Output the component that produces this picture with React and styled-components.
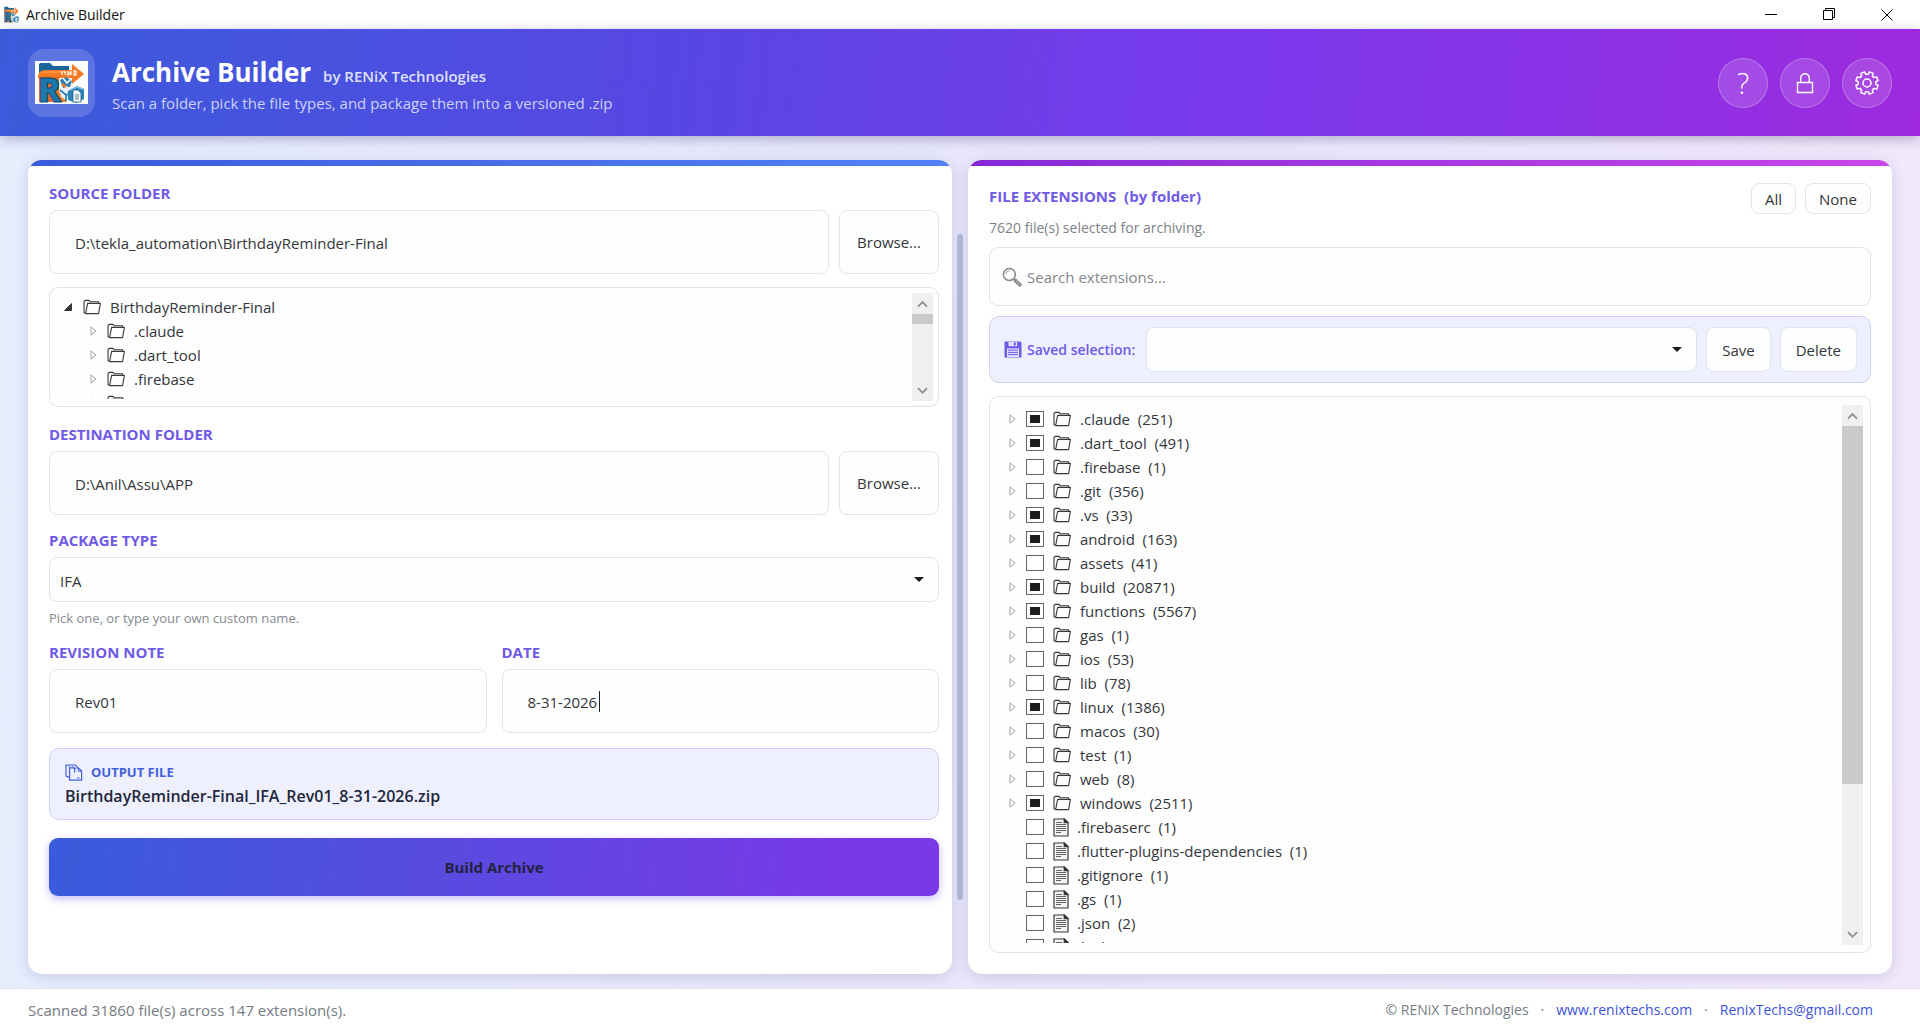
import React, { useState } from 'react'
import styled, { createGlobalStyle } from 'styled-components'

const GlobalStyle = createGlobalStyle`
  * {
    box-sizing: border-box;
  }

  body {
    margin: 0;
    font-family: "Open Sans", "Noto Sans", sans-serif;
    font-size: 15px;
    line-height: 20px;
    color: #33363b;
  }

  button, input, select {
    font: inherit;
    color: inherit;
  }
`

const folders = [
  { name: '.claude', count: 251, mixed: true },
  { name: '.dart_tool', count: 491, mixed: true },
  { name: '.firebase', count: 1 },
  { name: '.git', count: 356 },
  { name: '.vs', count: 33, mixed: true },
  { name: 'android', count: 163, mixed: true },
  { name: 'assets', count: 41 },
  { name: 'build', count: 20871, mixed: true },
  { name: 'functions', count: 5567, mixed: true },
  { name: 'gas', count: 1 },
  { name: 'ios', count: 53 },
  { name: 'lib', count: 78 },
  { name: 'linux', count: 1386, mixed: true },
  { name: 'macos', count: 30 },
  { name: 'test', count: 1 },
  { name: 'web', count: 8 },
  { name: 'windows', count: 2511, mixed: true },
]

const files = [
  { name: '.firebaserc', count: 1 },
  { name: '.flutter-plugins-dependencies', count: 1 },
  { name: '.gitignore', count: 1 },
  { name: '.gs', count: 1 },
  { name: '.json', count: 2 },
  { name: '.lock', count: 1 },
]

/* ---------- icons ---------- */

const LogoSvg = styled.svg`
  overflow: visible;
`

function LogoIcon({ width, height }) {
  return (
    <LogoSvg width={width} height={height} viewBox="0 0 53 43" preserveAspectRatio="none" aria-hidden="true">
      <rect width="53" height="43" fill="#fdfdfd" />
      <path d="M4 4q0-2 2-2h9l3 3h16v8H4z" fill="#17669c" />
      <path d="M3 17q0-8 7-8h27V3l12 10-12 10v-6H10q-3 0-4 4z" fill="#f47a23" />
      <path d="M6 11h31" stroke="#ffa45c" strokeWidth="1" />
      <path d="M27 10v4M29 10l2 4M33 10v4l2-2 1 2v-4M39 10v4h2v-4z" stroke="#fff2e3" strokeWidth="1.3" fill="none" />
      <path d="M4 16h20v25H4z" fill="#d96c26" />
      <path d="M15 41l8-12 9 12z" fill="#ef7a2b" />
      <path d="M25 19l6-3 6 4-2 6-7 1z" fill="#2d7fb0" />
      <path d="M28 17l4 5 4-4" stroke="#e9f4fb" strokeWidth="1.6" fill="none" />
      <path d="M25 29l7-4 6 6-7 8-5-3z" fill="#e8f1f7" />
      <path d="M25 29l6 5 7-3M31 34v6" stroke="#2b83b8" strokeWidth="1.8" fill="none" />
      <path d="M27 23l4 3" stroke="#f47a23" strokeWidth="2.4" />
      <path d="M33 30l9-5 7 3v10l-8 4-8-3z" fill="#2b83b8" />
      <path d="M35 29l7-3 6 2" stroke="#7cc0e6" strokeWidth="1.4" fill="none" />
      <path d="M38 29h5l3 3v9h-8z" fill="#f6fafc" stroke="#1c5d8c" strokeWidth="0.8" />
      <path d="M40 34h4M40 36h4M40 38h4" stroke="#51748c" strokeWidth="0.9" />
      <text x="3" y="41" fontFamily="Open Sans" fontWeight="800" fontSize="34" fill="#1d78ae" stroke="#0d4a78" strokeWidth="1">R</text>
    </LogoSvg>
  )
}

function FolderIcon() {
  return (
    <svg width="18" height="16" viewBox="0 0 18 16" fill="none" stroke="#3a3a3a" strokeWidth="1.1" strokeLinejoin="round" aria-hidden="true">
      <path d="M2.6 14.4L1 13.6V2.6L2 1.4h4l1.2 1.4h8.4v1.6" />
      <path d="M4.6 4.4h12.8l-1.8 10.2H2.6z" />
    </svg>
  )
}

function FileIcon() {
  return (
    <svg width="16" height="19" viewBox="0 0 16 19" fill="none" stroke="#3a3a3a" strokeWidth="1.2" aria-hidden="true">
      <path d="M1 1h10.5L15 4.4V18H1z" fill="#f4f4f4" />
      <path d="M11.2 1v3.6H15z" fill="#222" />
      <path d="M3 4.5h6M3 6.5h10M3 8.5h10M3 10.5h10M3 12.5h10M3 14.5h5" strokeWidth="0.8" />
    </svg>
  )
}

function Arrow({ open }) {
  if (open) {
    return (
      <svg width="8" height="8" viewBox="0 0 8 8" aria-hidden="true">
        <path d="M7.5 0.5v7h-7z" fill="#333" stroke="#222" strokeWidth="0.8" />
      </svg>
    )
  }
  return (
    <svg width="8" height="10" viewBox="0 0 8 10" aria-hidden="true">
      <path d="M1 0.8l5 4.2-5 4.2z" fill="#fff" stroke="#a3a3a3" strokeWidth="1" />
    </svg>
  )
}

function SearchIcon() {
  return (
    <svg width="20" height="20" viewBox="0 0 20 20" fill="none" stroke="#85888c" aria-hidden="true">
      <circle cx="7.4" cy="7.4" r="6" strokeWidth="1.5" />
      <path d="M3.8 7.4a3.6 3.6 0 0 1 3.6-3.6" strokeWidth="0.8" />
      <path d="M11.8 11.8l1.6 1.6" strokeWidth="1.4" />
      <path d="M13.6 13.6l4.2 4" strokeWidth="3.8" strokeLinecap="round" />
      <path d="M13.8 13.4l4 3.8" stroke="#c9cbce" strokeWidth="1" />
    </svg>
  )
}

function FloppyIcon() {
  return (
    <svg width="18" height="17" viewBox="0 0 18 17" aria-hidden="true">
      <path d="M0.5 0.5h15.8l1.2 1.2v14.8H0.5z" fill="#6f5ce6" />
      <path d="M4.5 0.8h8.6v4.4H4.5z" fill="#e4e1fc" />
      <path d="M9.8 1.4h2v3h-2z" fill="#6f5ce6" />
      <path d="M3 7.4h12V16H3z" fill="#e4e1fc" />
      <path d="M4 9.2h10M4 11.4h10M4 13.6h10" stroke="#6f5ce6" strokeWidth="1" />
    </svg>
  )
}

function CopyIcon() {
  return (
    <svg width="18" height="17" viewBox="0 0 18 17" fill="none" stroke="#4361dc" strokeWidth="1.2" aria-hidden="true">
      <path d="M4 13.4L1 12V1h9.4l2.4 2.4" />
      <path d="M3.4 1.4L6 4.2M6.8 1.4l2.4 2.4" strokeWidth="0.9" />
      <path d="M4.6 3.8h4l1 1.2v-1h4l3 3v9.2H4.6z" fill="#eef0ff" />
      <path d="M9.6 4.4v4.4M13.4 4v3.2h3.2M12 14h2.6" strokeWidth="1" />
    </svg>
  )
}

function LockIcon() {
  return (
    <svg width="18" height="22" viewBox="0 0 18 22" fill="none" stroke="#fff" strokeWidth="1.4" aria-hidden="true">
      <path d="M1.5 10.5h15v10h-15z" />
      <path d="M4.7 10.5V6a4.3 4.3 0 0 1 8.6 0v4.5" />
    </svg>
  )
}

// eight teeth, with a valley straight up
function gearPath(cx, cy, outer, inner) {
  const points = []
  const steps = [[-15, inner], [-10, outer], [10, outer], [15, inner]]
  for (let i = 0; i < 8; i++) {
    const middle = 22.5 + i * 45
    steps.forEach(([offset, r]) => {
      const a = ((middle + offset - 90) * Math.PI) / 180
      points.push(`${(cx + r * Math.cos(a)).toFixed(2)} ${(cy + r * Math.sin(a)).toFixed(2)}`)
    })
  }
  return `M${points.join('L')}Z`
}

function GearIcon() {
  return (
    <svg width="26" height="26" viewBox="0 0 26 26" fill="none" stroke="#fff" strokeWidth="1.5" strokeLinejoin="round" aria-hidden="true">
      <path d={gearPath(13, 13, 11.4, 8.8)} />
      <circle cx="13" cy="13" r="4" />
    </svg>
  )
}

function Chevron({ down }) {
  return (
    <svg width="11" height="8" viewBox="0 0 11 8" fill="none" stroke="#8d8d8d" strokeWidth="1.8" aria-hidden="true">
      <path d={down ? 'M1 1.2l4.5 4.6L10 1.2' : 'M1 6.6l4.5-4.6L10 6.6'} />
    </svg>
  )
}

/* ---------- window ---------- */

const Window = styled.div`
  display: flex;
  flex-direction: column;
  height: 100vh;
  min-height: 960px;
  background: linear-gradient(100deg, #e7eefe 0%, #e9e8fb 50%, #f3e9fc 100%);
`

const TitleBar = styled.div`
  display: flex;
  align-items: center;
  gap: 6px;
  height: 29px;
  padding: 0 4px 0 3px;
  background: #fff;
  color: #111;
  font-size: 14px;
`

const WindowControls = styled.div`
  display: flex;
  margin-left: auto;
`

const WindowButton = styled.button`
  display: flex;
  align-items: center;
  justify-content: center;
  width: 58px;
  height: 29px;
  padding: 0;
  border: 0;
  background: none;
`

const Header = styled.header`
  display: flex;
  align-items: center;
  gap: 17px;
  height: 107px;
  padding: 0 28px;
  background: linear-gradient(97deg, #3a5cdb 0%, #5a45e3 38%, #7c3aed 64%, #8f31e4 86%, #9e29de 100%);
  box-shadow: 0 3px 12px rgba(60, 50, 110, 0.35);
`

const LogoTile = styled.div`
  display: flex;
  align-items: center;
  justify-content: center;
  width: 67px;
  height: 68px;
  border-radius: 16px;
  background: rgba(255, 255, 255, 0.16);
`

const HeaderText = styled.div`
  display: flex;
  flex-direction: column;
  gap: 4px;
  padding-top: 2px;
`

const TitleLine = styled.div`
  display: flex;
  align-items: baseline;
  gap: 12px;
  color: #dfe1fb;
  font-weight: 600;
`

const Title = styled.h1`
  margin: 0;
  color: #fff;
  font-size: 26px;
  line-height: 34px;
  font-weight: 700;
`

const Tagline = styled.div`
  color: #cdd2f8;
`

const HeaderActions = styled.div`
  display: flex;
  gap: 12px;
  margin-left: auto;
`

const RoundButton = styled.button`
  display: flex;
  align-items: center;
  justify-content: center;
  width: 50px;
  height: 50px;
  padding: 0;
  border: 1px solid rgba(255, 255, 255, 0.26);
  border-radius: 50%;
  background: rgba(255, 255, 255, 0.14);
  color: #fff;
  font-size: 29px;
  font-weight: 300;
`

/* ---------- panels ---------- */

const Panels = styled.main`
  flex: 1;
  min-height: 0;
  display: grid;
  grid-template-columns: minmax(0, 1fr) 16px minmax(0, 1fr);
  padding: 24px 28px 14px;
`

const Card = styled.section`
  display: flex;
  flex-direction: column;
  min-height: 0;
  border-radius: 14px;
  overflow: hidden;
  background: #fff;
  box-shadow: 0 3px 16px rgba(60, 60, 120, 0.18);
`

const CardStripe = styled.div`
  flex: none;
  height: 6px;
  background: ${p => p.$purple
    ? 'linear-gradient(90deg, #8428d8, #9a33dc 30%, #c845ea)'
    : 'linear-gradient(90deg, #3a5bdc, #5480f5)'};
`

const CardBody = styled.div`
  flex: 1;
  min-height: 0;
  display: flex;
  flex-direction: column;
  padding: ${p => p.$wide ? '17px 21px 21px 21px' : '17px 13px 21px 21px'};
`

const Splitter = styled.div`
  display: flex;
  justify-content: center;
  padding: 74px 0;
`

const SplitterThumb = styled.div`
  width: 6px;
  border-radius: 3px;
  background: #b1bad8;
`

/* ---------- form parts ---------- */

const Field = styled.div`
  display: flex;
  flex-direction: column;
  gap: 7px;
  margin-bottom: ${p => p.$tall ? '17px' : '15px'};
`

const Label = styled.label`
  color: #6f5ae6;
  font-size: 15px;
  font-weight: 700;
`

const Heading = styled.h2`
  margin: 0;
  color: #6f5ae6;
  font-size: 15px;
  line-height: 26px;
  font-weight: 700;
  white-space: pre;
`

const Row = styled.div`
  display: flex;
  gap: 10px;
`

const TwoColumns = styled.div`
  display: grid;
  grid-template-columns: 1fr 1fr;
  gap: 15px;
`

const TextBox = styled.input`
  flex: 1;
  min-width: 0;
  width: 100%;
  height: 64px;
  padding: 1px 25px 0;
  border: 1px solid #e1e3ee;
  border-radius: 8px;
  background: #fefefe;
  outline: none;
`

const CaretWrap = styled.div`
  position: relative;
  display: flex;
`

const Caret = styled.span`
  position: absolute;
  top: 22px;
  left: 97px;
  width: 1px;
  height: 21px;
  background: #222;
`

const Button = styled.button`
  height: ${p => p.$height};
  padding: 0 ${p => p.$pad || '13px'};
  border: 1px solid #e3e4ec;
  border-radius: 8px;
  background: #fefefe;
  white-space: nowrap;
`

const BrowseButton = styled(Button)`
  width: 100px;
`

const SelectWrap = styled.div`
  position: relative;
  flex: 1;
  display: flex;

  svg {
    position: absolute;
    right: 15px;
    top: 50%;
    margin-top: -3px;
    pointer-events: none;
  }
`

const Select = styled.select`
  appearance: none;
  width: 100%;
  height: 45px;
  padding: 2px 30px 0 10px;
  border: 1px solid #dfe1ee;
  border-radius: 8px;
  background: #fefefe;
`

const Hint = styled.div`
  color: #868a91;
  font-size: 13px;
  line-height: 18px;
`

const SelectedCount = styled.div`
  margin-top: 4px;
  color: #7d8187;
  font-size: 14px;
`

const OutputBox = styled.div`
  height: 72px;
  padding: 13px 15px;
  border: 1px solid #cfd0f5;
  border-radius: 10px;
  background: #eef0ff;
`

const OutputLabel = styled.div`
  display: flex;
  align-items: center;
  gap: 8px;
  color: #4361dc;
  font-size: 13px;
  font-weight: 700;
`

const OutputName = styled.div`
  margin-top: 4px;
  color: #22263a;
  font-size: 16px;
  font-weight: 600;
`

const BuildButton = styled.button`
  height: 58px;
  margin-top: 18px;
  border: 0;
  border-radius: 9px;
  background: linear-gradient(93deg, #395cdb 0%, #5a4ae0 45%, #7a39e6 90%);
  box-shadow: 0 3px 9px rgba(100, 60, 230, 0.35);
  color: #23233f;
  font-weight: 700;
`

/* ---------- trees ---------- */

const TreeBox = styled.div`
  display: flex;
  border: 1px solid #e1e2ec;
  border-radius: 9px;
  background: #fefefe;
  ${p => p.$fill
    ? 'flex: 1; min-height: 0; margin-top: 13px; padding: 8px 7px 7px 19px;'
    : 'height: 120px; margin-top: 6px; padding: 5px 5px 5px 14px;'}
`

const TreeList = styled.ul`
  flex: 1;
  margin: 2px 0;
  padding: 0;
  overflow: hidden;
  list-style: none;
`

const TreeRow = styled.li`
  display: flex;
  align-items: center;
  height: 24px;
  padding-left: ${p => p.$indent || '0'};
  white-space: pre;
`

const ArrowCell = styled.span`
  display: flex;
  align-items: center;
  width: ${p => p.$width || '17px'};
`

const IconCell = styled.span`
  display: flex;
  width: ${p => p.$width || '27px'};
`

const CheckLabel = styled.label`
  display: flex;
  align-items: center;
  white-space: pre;
`

const Check = styled.input`
  appearance: none;
  flex: none;
  width: 18px;
  height: 16px;
  margin: 0 9px 0 0;
  border: 1px solid #666;
  background: #fff;

  ${p => p.$mixed && `
    padding: 3px;
    background: #1e1e1e content-box;
  `}

  &:checked {
    background: #4361dc;
  }
`

const ScrollTrack = styled.div`
  display: flex;
  flex-direction: column;
  justify-content: space-between;
  width: 21px;
  background: #f0f0f0;
`

const ScrollArrow = styled.button`
  display: flex;
  align-items: center;
  justify-content: center;
  width: 100%;
  height: 21px;
  padding: 0;
  border: 0;
  background: none;
`

const ScrollThumb = styled.div`
  height: ${p => p.$height};
  background: #cacaca;
`

function Scrollbar({ thumb }) {
  return (
    <ScrollTrack>
      <div>
        <ScrollArrow aria-label="Scroll up"><Chevron /></ScrollArrow>
        <ScrollThumb $height={thumb} />
      </div>
      <ScrollArrow aria-label="Scroll down"><Chevron down /></ScrollArrow>
    </ScrollTrack>
  )
}

/* ---------- right panel ---------- */

const PanelTop = styled.div`
  display: flex;
  align-items: flex-start;
  gap: 9px;

  h2 {
    flex: 1;
  }
`

const SearchBox = styled.label`
  display: flex;
  align-items: center;
  gap: 3px;
  height: 59px;
  margin-top: 9px;
  padding: 1px 12px 0;
  border: 1px solid #e1e2ea;
  border-radius: 9px;
  background: #fefefe;

  input {
    flex: 1;
    border: 0;
    outline: none;
    background: none;
  }

  input::placeholder {
    color: #85888c;
    opacity: 1;
  }
`

const SavedBar = styled.div`
  display: flex;
  align-items: center;
  gap: 9px;
  height: 67px;
  margin-top: 10px;
  padding: 0 13px 0 14px;
  border: 1px solid #cfd0f5;
  border-radius: 10px;
  background: #eeefff;
`

const SavedLabel = styled(Label)`
  display: flex;
  align-items: center;
  gap: 5px;
  padding-right: 2px;
  font-size: 14px;
  font-weight: 600;
`

const Footer = styled.footer`
  display: flex;
  justify-content: space-between;
  padding: 10px 47px 5px 28px;
  border-top: 1px solid #e4e2ef;
  background: #fff;
  color: #767b83;
  line-height: 22px;

  a {
    color: #4053dd;
    text-decoration: none;
  }
`

const FooterLinks = styled.div`
  display: flex;
  gap: 12px;
  font-size: 14px;
`

function Dropdown({ id, children }) {
  return (
    <SelectWrap>
      <Select id={id}>{children}</Select>
      <svg width="10" height="5" viewBox="0 0 10 5" aria-hidden="true">
        <path d="M0 0h10L5 5z" fill="#1c1c24" />
      </svg>
    </SelectWrap>
  )
}

function ExtensionRow({ item, file }) {
  const [checked, setChecked] = useState(false)
  return (
    <TreeRow>
      <ArrowCell>{!file && <Arrow />}</ArrowCell>
      <CheckLabel>
        <Check
          type="checkbox"
          checked={checked}
          onChange={e => setChecked(e.target.checked)}
          $mixed={item.mixed}
        />
        <IconCell $width={file ? '24px' : '27px'}>{file ? <FileIcon /> : <FolderIcon />}</IconCell>
        {`${item.name}  (${item.count})`}
      </CheckLabel>
    </TreeRow>
  )
}

export default function App() {
  const [source, setSource] = useState('D:\\tekla_automation\\BirthdayReminder-Final')
  const [destination, setDestination] = useState('D:\\Anil\\Assu\\APP')
  const [revision, setRevision] = useState('Rev01')
  const [date, setDate] = useState('8-31-2026')

  return (
    <Window>
      <GlobalStyle />

      <TitleBar>
        <LogoIcon width="17" height="17" />
        <span>Archive Builder</span>
        <WindowControls>
          <WindowButton aria-label="Minimize">
            <svg width="12" height="12" viewBox="0 0 12 12"><path d="M0 5.5h12" stroke="#000" /></svg>
          </WindowButton>
          <WindowButton aria-label="Restore">
            <svg width="13" height="13" viewBox="0 0 13 13" fill="none" stroke="#000">
              <path d="M0.5 2.5h9v9h-9zM2.5 2.5v-2h9v9h-2" />
            </svg>
          </WindowButton>
          <WindowButton aria-label="Close">
            <svg width="12" height="12" viewBox="0 0 12 12"><path d="M0.5 0.5l11 11M11.5 0.5l-11 11" stroke="#000" /></svg>
          </WindowButton>
        </WindowControls>
      </TitleBar>

      <Header>
        <LogoTile><LogoIcon width="53" height="43" /></LogoTile>
        <HeaderText>
          <TitleLine>
            <Title>Archive Builder</Title>
            <span>by RENiX Technologies</span>
          </TitleLine>
          <Tagline>Scan a folder, pick the file types, and package them into a versioned .zip</Tagline>
        </HeaderText>
        <HeaderActions>
          <RoundButton>?</RoundButton>
          <RoundButton aria-label="Lock"><LockIcon /></RoundButton>
          <RoundButton aria-label="Settings"><GearIcon /></RoundButton>
        </HeaderActions>
      </Header>

      <Panels>
        <Card>
          <CardStripe />
          <CardBody>
            <Field $tall>
              <Label htmlFor="source">SOURCE FOLDER</Label>
              <Row>
                <TextBox id="source" value={source} onChange={e => setSource(e.target.value)} />
                <BrowseButton $height="64px">Browse...</BrowseButton>
              </Row>
              <TreeBox>
                <TreeList>
                  <TreeRow>
                    <ArrowCell $width="19px"><Arrow open /></ArrowCell>
                    <IconCell><FolderIcon /></IconCell>
                    BirthdayReminder-Final
                  </TreeRow>
                  {folders.slice(0, 4).map(f => (
                    <TreeRow key={f.name} $indent="26px">
                      <ArrowCell><Arrow /></ArrowCell>
                      <IconCell><FolderIcon /></IconCell>
                      {f.name}
                    </TreeRow>
                  ))}
                </TreeList>
                <Scrollbar thumb="10px" />
              </TreeBox>
            </Field>

            <Field>
              <Label htmlFor="destination">DESTINATION FOLDER</Label>
              <Row>
                <TextBox id="destination" value={destination} onChange={e => setDestination(e.target.value)} />
                <BrowseButton $height="64px">Browse...</BrowseButton>
              </Row>
            </Field>

            <Field>
              <Label htmlFor="package">PACKAGE TYPE</Label>
              <Dropdown id="package">
                <option>IFA</option>
              </Dropdown>
              <Hint>Pick one, or type your own custom name.</Hint>
            </Field>

            <TwoColumns>
              <Field>
                <Label htmlFor="revision">REVISION NOTE</Label>
                <TextBox id="revision" value={revision} onChange={e => setRevision(e.target.value)} />
              </Field>
              <Field>
                <Label htmlFor="date">DATE</Label>
                <CaretWrap>
                  <TextBox id="date" value={date} onChange={e => setDate(e.target.value)} />
                  <Caret />
                </CaretWrap>
              </Field>
            </TwoColumns>

            <OutputBox>
              <OutputLabel><CopyIcon />OUTPUT FILE</OutputLabel>
              <OutputName>{`BirthdayReminder-Final_IFA_${revision}_${date}.zip`}</OutputName>
            </OutputBox>

            <BuildButton>Build Archive</BuildButton>
          </CardBody>
        </Card>

        <Splitter><SplitterThumb /></Splitter>

        <Card>
          <CardStripe $purple />
          <CardBody $wide>
            <PanelTop>
              <Heading>FILE EXTENSIONS  (by folder)</Heading>
              <Button $height="31px">All</Button>
              <Button $height="31px">None</Button>
            </PanelTop>
            <SelectedCount>7620 file(s) selected for archiving.</SelectedCount>
            <SearchBox>
              <SearchIcon />
              <input type="text" placeholder="Search extensions..." />
            </SearchBox>
            <SavedBar>
              <SavedLabel htmlFor="saved"><FloppyIcon />Saved selection:</SavedLabel>
              <Dropdown id="saved">
                <option></option>
              </Dropdown>
              <Button $height="45px" $pad="15px">Save</Button>
              <Button $height="45px" $pad="15px">Delete</Button>
            </SavedBar>
            <TreeBox $fill>
              <TreeList>
                {folders.map(f => <ExtensionRow key={f.name} item={f} />)}
                {files.map(f => <ExtensionRow key={f.name} item={f} file />)}
              </TreeList>
              <Scrollbar thumb="358px" />
            </TreeBox>
          </CardBody>
        </Card>
      </Panels>

      <Footer>
        <span>Scanned 31860 file(s) across 147 extension(s).</span>
        <FooterLinks>
          <span>© RENiX Technologies</span>
          <span>·</span>
          <a href="https://www.renixtechs.com">www.renixtechs.com</a>
          <span>·</span>
          <a href="mailto:RenixTechs@gmail.com">RenixTechs@gmail.com</a>
        </FooterLinks>
      </Footer>
    </Window>
  )
}
